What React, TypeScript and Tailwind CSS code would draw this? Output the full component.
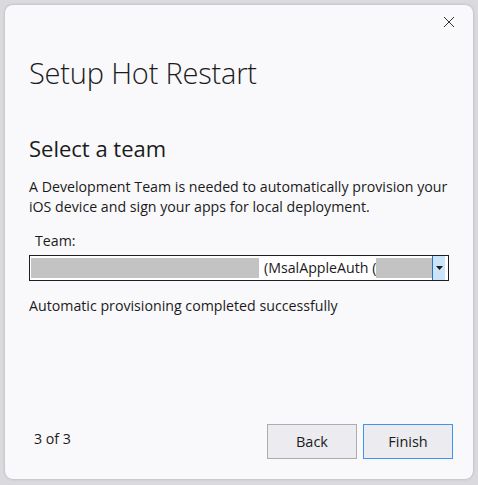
const font = { fontFamily: '"Open Sans", "Noto Sans", sans-serif' };

const App = () => {
  return (
    <div className="h-[485px] w-[478px] bg-[#d9d9de] p-[5px] pb-[6px]" style={font}>
      <div className="flex h-full flex-col rounded-[8px] bg-[#f9f9fb] shadow-[0_0_3px_rgba(0,0,0,0.2)] text-[#1b1b1b]">
        <div className="flex justify-end pr-[18px] pt-[11px]">
          <svg width="12" height="12" viewBox="0 0 12 12" className="text-[#333]">
            <path d="M1 1L11 11M11 1L1 11" stroke="currentColor" strokeWidth="1" />
          </svg>
        </div>
        <div className="flex flex-1 flex-col pl-[24px] pr-[20px]">
          <h1 className="mt-[27px] text-[29px] font-light leading-[36px] tracking-[-0.2px]">
            Setup Hot Restart
          </h1>
          <h2 className="mt-[43px] text-[22px] leading-[28px]">Select a team</h2>
          <p className="mt-[15px] text-[14.2px] leading-[20px]">
            A Development Team is needed to automatically provision your iOS device and sign your
            apps for local deployment.
          </p>
          <label className="mt-[14px] pl-[6px] text-[14.2px] leading-[20px]">Team:</label>
          <div className="mt-[4px] flex h-[26px] w-[420px] items-stretch border border-[#1f1f1f] bg-white text-[14.2px]">
            <div className="my-[2px] ml-[1px] w-[228px] bg-[#c3c3c3]" />
            <span className="ml-[5px] whitespace-nowrap leading-[24px]">(MsalAppleAuth (</span>
            <div className="my-[2px] w-[56px] bg-[#c3c3c3]" />
            <div className="flex w-[13px] items-center justify-center border-l border-[#2a6fc9] bg-[#cce4f7]">
              <svg width="7" height="4" viewBox="0 0 7 4">
                <path d="M0 0H7L3.5 4Z" fill="#1b1b1b" />
              </svg>
            </div>
          </div>
          <p className="mt-[15px] text-[14.2px] leading-[20px]">
            Automatic provisioning completed successfully
          </p>
          <div className="mt-auto mb-[20px] flex items-center">
            <span className="ml-[5px] mb-[5px] text-[14.2px]">3 of 3</span>
            <div className="ml-auto flex gap-[6px]">
              <button className="h-[35px] w-[90px] border border-[#adadad] bg-[#ebebf0] text-[14.5px]">
                Back
              </button>
              <button className="h-[35px] w-[90px] border border-[#3c94f0] bg-[#ebebf0] text-[14.5px]">
                Finish
              </button>
            </div>
          </div>
        </div>
      </div>
    </div>
  );
};

export default App;
